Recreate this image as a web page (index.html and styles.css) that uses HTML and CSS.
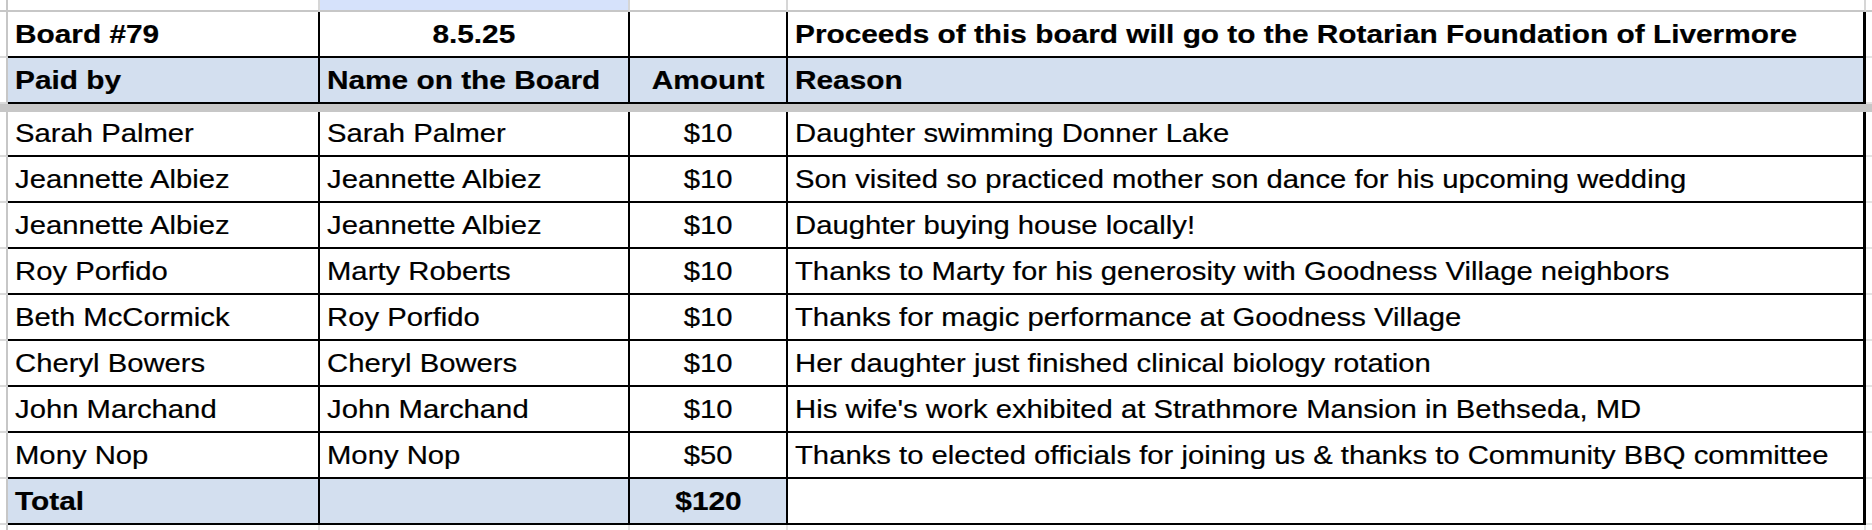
FILE: index.html
```html
<!DOCTYPE html>
<html lang="en">
<head>
<meta charset="utf-8">
<title>Board #79</title>
<link rel="stylesheet" href="styles.css">
</head>
<body>
<div class="sheet">
  <div class="hd hd-gut"></div><div class="hd"></div><div class="hd sel"></div><div class="hd"></div><div class="hd"></div><div class="hd hd-end"></div>

  <div class="gl"></div>
  <div class="cell bold"><span class="t">Board #79</span></div>
  <div class="cell bold center"><span class="t">8.5.25</span></div>
  <div class="cell"></div>
  <div class="cell bold last"><span class="t">Proceeds of this board will go to the Rotarian Foundation of Livermore</span></div>
  <div class="gr"></div>

  <div class="gl"></div>
  <div class="cell bold blue"><span class="t">Paid by</span></div>
  <div class="cell bold blue"><span class="t">Name on the Board</span></div>
  <div class="cell bold blue center"><span class="t">Amount</span></div>
  <div class="cell bold blue last"><span class="t">Reason</span></div>
  <div class="gr"></div>

  <div class="freeze"></div>

  <div class="gl"></div>
  <div class="cell"><span class="t">Sarah Palmer</span></div>
  <div class="cell"><span class="t">Sarah Palmer</span></div>
  <div class="cell center"><span class="t">$10</span></div>
  <div class="cell last"><span class="t">Daughter swimming Donner Lake</span></div>
  <div class="gr"></div>

  <div class="gl"></div>
  <div class="cell"><span class="t">Jeannette Albiez</span></div>
  <div class="cell"><span class="t">Jeannette Albiez</span></div>
  <div class="cell center"><span class="t">$10</span></div>
  <div class="cell last"><span class="t">Son visited so practiced mother son dance for his upcoming wedding</span></div>
  <div class="gr"></div>

  <div class="gl"></div>
  <div class="cell"><span class="t">Jeannette Albiez</span></div>
  <div class="cell"><span class="t">Jeannette Albiez</span></div>
  <div class="cell center"><span class="t">$10</span></div>
  <div class="cell last"><span class="t">Daughter buying house locally!</span></div>
  <div class="gr"></div>

  <div class="gl"></div>
  <div class="cell"><span class="t">Roy Porfido</span></div>
  <div class="cell"><span class="t">Marty Roberts</span></div>
  <div class="cell center"><span class="t">$10</span></div>
  <div class="cell last"><span class="t">Thanks to Marty for his generosity with Goodness Village neighbors</span></div>
  <div class="gr"></div>

  <div class="gl"></div>
  <div class="cell"><span class="t">Beth McCormick</span></div>
  <div class="cell"><span class="t">Roy Porfido</span></div>
  <div class="cell center"><span class="t">$10</span></div>
  <div class="cell last"><span class="t">Thanks for magic performance at Goodness Village</span></div>
  <div class="gr"></div>

  <div class="gl"></div>
  <div class="cell"><span class="t">Cheryl Bowers</span></div>
  <div class="cell"><span class="t">Cheryl Bowers</span></div>
  <div class="cell center"><span class="t">$10</span></div>
  <div class="cell last"><span class="t">Her daughter just finished clinical biology rotation</span></div>
  <div class="gr"></div>

  <div class="gl"></div>
  <div class="cell"><span class="t">John Marchand</span></div>
  <div class="cell"><span class="t">John Marchand</span></div>
  <div class="cell center"><span class="t">$10</span></div>
  <div class="cell last"><span class="t">His wife's work exhibited at Strathmore Mansion in Bethseda, MD</span></div>
  <div class="gr"></div>

  <div class="gl"></div>
  <div class="cell"><span class="t">Mony Nop</span></div>
  <div class="cell"><span class="t">Mony Nop</span></div>
  <div class="cell center"><span class="t">$50</span></div>
  <div class="cell last"><span class="t">Thanks to elected officials for joining us &amp; thanks to Community BBQ committee</span></div>
  <div class="gr"></div>

  <div class="gl"></div>
  <div class="cell bold blue"><span class="t">Total</span></div>
  <div class="cell blue"></div>
  <div class="cell bold blue center"><span class="t">$120</span></div>
  <div class="cell last"></div>
  <div class="gr"></div>

  <div class="fl fl-gut"></div><div class="fl"></div><div class="fl"></div><div class="fl"></div><div class="fl"></div><div class="fl fl-end"></div>
</div>
</body>
</html>
```
FILE: styles.css
```css
* { box-sizing: border-box; }

body {
  margin: 0;
  background: #ffffff;
  font-family: "Liberation Sans", Arial, sans-serif;
  color: #000000;
}

.sheet {
  display: grid;
  grid-template-columns: 8px 312px 310px 158px 1078px 6px;
  grid-template-rows: 12px 46px 46px 8px 45px repeat(8, 46px) 5px;
  width: 1872px;
  height: 530px;
  overflow: hidden;
}

/* column header strip (cropped) */
.hd {
  background: #ffffff;
  border-bottom: 2px solid #c7c7c7;
  border-right: 2px solid #d6d6d6;
}
.hd-gut { border-right: 2px solid #c7c7c7; }
.hd-end { border-right: none; }
.sel { background: #d6e2fb; }

/* row gutters */
.gl {
  border-right: 2px solid #c7c7c7;
  border-bottom: 2px solid #dadada;
}
.gr {
  border-bottom: 2px solid #e2e2e2;
}

.freeze {
  grid-column: 1 / -1;
  background: #c7c7c7;
}

/* cells */
.cell {
  display: flex;
  align-items: center;
  padding: 0 7px;
  border-right: 2px solid #000000;
  border-bottom: 2px solid #000000;
  font-size: 26.5px;
  white-space: nowrap;
  overflow: visible;
}
.cell.last { border-right-width: 3px; }
.bold { font-weight: 700; }
.blue { background: #d3dfef; }
.center { justify-content: center; }

.t {
  display: inline-block;
  transform: scaleX(1.104);
  transform-origin: left center;
  -webkit-text-stroke: 0.2px #000000;
}
.bold .t { transform: scaleX(1.125); }
.center .t { transform-origin: center center; }

/* filler below the table */
.fl { border-right: 2px solid #e2e2e2; }
.fl-gut { border-right: 2px solid #c7c7c7; }
.fl-end { border-right: none; }
```
